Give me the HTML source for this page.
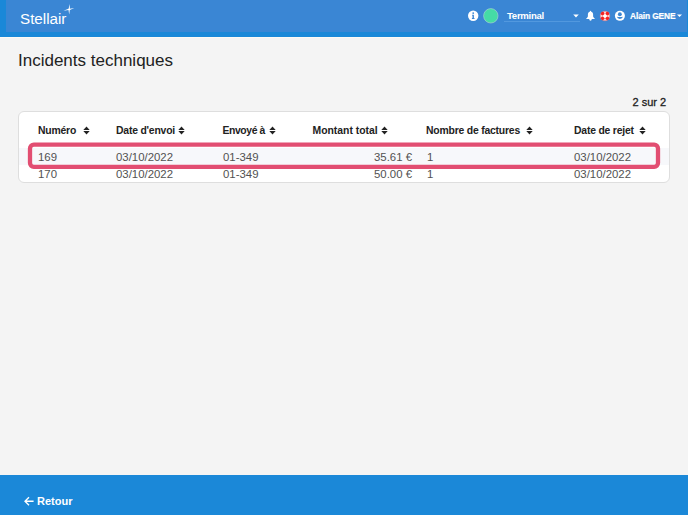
<!DOCTYPE html>
<html><head><meta charset="utf-8">
<style>
*{box-sizing:border-box;margin:0;padding:0}
html,body{width:688px;height:515px;overflow:hidden;background:#f4f4f4;font-family:"Liberation Sans",sans-serif;position:relative}
.abs{position:absolute;white-space:nowrap}
#hdr{position:absolute;left:0;top:0;width:688px;height:37px;background:#1a88d8}
#hdrin{position:absolute;left:6px;top:0;width:681px;height:32px;background:#3a86d4}
#hline{position:absolute;left:0;top:37px;width:688px;height:1px;background:#fcfaf5}
.logo{left:20px;top:10px;font-size:15.2px;color:#fff;line-height:17px}
.w{color:#fff;font-weight:bold}
#title{left:18px;top:51px;font-size:17px;color:#222;line-height:20px}
#count{left:632.5px;top:94.5px;font-size:11px;color:#1e1e1e;line-height:14px;-webkit-text-stroke:0.3px #1e1e1e}
#card{position:absolute;left:18px;top:111px;width:652px;height:71.5px;background:#fff;border:1px solid #dedede;border-radius:6px}
#rowbg{position:absolute;left:19px;top:147.5px;width:650px;height:17px;background:#f7f8fb}
#hl{position:absolute;left:28px;top:142.5px;width:632px;height:26.5px;border:4px solid #e24e72;border-radius:5px}
.th{font-size:10.4px;letter-spacing:-0.2px;font-weight:bold;color:#222;line-height:12px;top:124.6px}
.td{font-size:11.4px;color:#525252;line-height:13px}
.sort{position:absolute;top:125.5px;width:7px;height:9px}
#ftr{position:absolute;left:0;top:474.5px;width:688px;height:41px;background:#1b88d8}
</style></head><body>
<div id="hdr"></div><div id="hdrin"></div><div id="hline"></div>
<div class="abs logo">Stellair</div>
<svg class="abs" style="left:62px;top:2px" width="14" height="14" viewBox="0 0 14 14">
<path d="M7.85 2.0 L7.85 6.7 L12.3 5.9 L7.8 8.0 L7.2 12.4 L6.5 8.0 L1.4 8.7 L6.55 6.7 Z" fill="#fff"/>
</svg>
<!-- right header -->
<svg class="abs" style="left:467px;top:10px" width="12" height="12" viewBox="0 0 12 12">
<circle cx="6.2" cy="5.8" r="5.2" fill="#fff"/>
<circle cx="6.2" cy="3.1" r="0.9" fill="#3a86d4"/>
<path d="M5 4.7 H6.9 V8.1 H7.5 V8.9 H4.9 V8.1 H5.5 V5.5 H5Z" fill="#3a86d4"/>
</svg>
<svg class="abs" style="left:483px;top:8px" width="16" height="16" viewBox="0 0 16 16">
<circle cx="7.8" cy="7.8" r="7.2" fill="#45dba6" stroke="#b5d3d6" stroke-width="0.6"/>
</svg>
<div class="abs w" style="left:507px;top:10.3px;font-size:9.6px;letter-spacing:-0.3px;line-height:11px">Terminal</div>
<div class="abs" style="left:504px;top:20.5px;width:76px;height:1.2px;background:#5298de"></div>
<svg class="abs" style="left:572px;top:13px" width="8" height="6" viewBox="0 0 8 6"><path d="M1.2 1.4 H6.8 L4 4.6Z" fill="#fff"/></svg>
<svg class="abs" style="left:584px;top:9px" width="13" height="13" viewBox="0 0 13 13">
<path d="M6.5 1.8 C6.1 1.8 5.9 2.2 5.8 2.7 C4.6 3 3.9 4 3.9 5.3 V7.2 C3.9 8 3.1 8.9 1.9 9.9 H11.1 C9.9 8.9 9.1 8 9.1 7.2 V5.3 C9.1 4 8.4 3 7.2 2.7 C7.1 2.2 6.9 1.8 6.5 1.8Z" fill="#fff"/>
<path d="M5.2 9.8 H7.8 C7.8 11 7.2 11.8 6.5 11.8 C5.8 11.8 5.2 11 5.2 9.8Z" fill="#fff"/>
</svg>
<svg class="abs" style="left:599px;top:10px" width="12" height="12" viewBox="0 0 12 12">
<circle cx="6" cy="6" r="4.8" fill="#fadede" stroke="#f06464" stroke-width="0.5"/>
<circle cx="3.65" cy="3.65" r="1.8" fill="#f52222"/>
<circle cx="8.35" cy="3.65" r="1.8" fill="#f52222"/>
<circle cx="3.65" cy="8.35" r="1.8" fill="#f52222"/>
<circle cx="8.35" cy="8.35" r="1.8" fill="#f52222"/>
<circle cx="6" cy="6" r="1.8" fill="#fff"/>
</svg>
<svg class="abs" style="left:614px;top:10px" width="12" height="12" viewBox="0 0 12 12">
<circle cx="5.9" cy="5.85" r="5" fill="#fff"/>
<circle cx="5.85" cy="4.25" r="1.95" fill="#3a86d4"/>
<path d="M2.9 6.8 Q5.9 7.3 8.9 6.8 Q8.5 8.9 5.9 8.9 Q3.3 8.9 2.9 6.8Z" fill="#3a86d4"/>
</svg>
<div class="abs w" style="left:630px;top:11px;font-size:8.4px;letter-spacing:-0.1px;line-height:11px;-webkit-text-stroke:0.2px #fff">Alain GENE</div>
<svg class="abs" style="left:676px;top:13px" width="7" height="5" viewBox="0 0 7 5"><path d="M1 1.4 H6 L3.5 4Z" fill="#fff"/></svg>

<div class="abs" id="title">Incidents techniques</div>
<div class="abs" id="count">2 sur 2</div>
<div id="card"></div>
<div id="rowbg"></div>

<div class="abs th" style="left:38px">Numéro</div>
<div class="abs th" style="left:116px">Date d'envoi</div>
<div class="abs th" style="left:222.5px;letter-spacing:-0.4px">Envoyé à</div>
<div class="abs th" style="left:312.5px;letter-spacing:0px">Montant total</div>
<div class="abs th" style="left:426px">Nombre de factures</div>
<div class="abs th" style="left:574px">Date de rejet</div>

<svg class="sort" style="left:82.5px" viewBox="0 0 7 9"><path d="M0.3 3.9 L3.5 0.5 L6.7 3.9Z M0.3 5.1 L3.5 8.5 L6.7 5.1Z" fill="#222"/></svg>
<svg class="sort" style="left:178px" viewBox="0 0 7 9"><path d="M0.3 3.9 L3.5 0.5 L6.7 3.9Z M0.3 5.1 L3.5 8.5 L6.7 5.1Z" fill="#222"/></svg>
<svg class="sort" style="left:269px" viewBox="0 0 7 9"><path d="M0.3 3.9 L3.5 0.5 L6.7 3.9Z M0.3 5.1 L3.5 8.5 L6.7 5.1Z" fill="#222"/></svg>
<svg class="sort" style="left:381px" viewBox="0 0 7 9"><path d="M0.3 3.9 L3.5 0.5 L6.7 3.9Z M0.3 5.1 L3.5 8.5 L6.7 5.1Z" fill="#222"/></svg>
<svg class="sort" style="left:525.5px" viewBox="0 0 7 9"><path d="M0.3 3.9 L3.5 0.5 L6.7 3.9Z M0.3 5.1 L3.5 8.5 L6.7 5.1Z" fill="#222"/></svg>
<svg class="sort" style="left:638.5px" viewBox="0 0 7 9"><path d="M0.3 3.9 L3.5 0.5 L6.7 3.9Z M0.3 5.1 L3.5 8.5 L6.7 5.1Z" fill="#222"/></svg>
<div class="abs td" style="left:38px;top:150.8px">169</div>
<div class="abs td" style="left:116px;top:150.8px">03/10/2022</div>
<div class="abs td" style="left:223px;top:150.8px">01-349</div>
<div class="abs td" style="left:340px;top:150.8px;width:72px;text-align:right">35.61 €</div>
<div class="abs td" style="left:427px;top:150.8px">1</div>
<div class="abs td" style="left:574px;top:150.8px">03/10/2022</div>

<div class="abs td" style="left:38px;top:168px">170</div>
<div class="abs td" style="left:116px;top:168px">03/10/2022</div>
<div class="abs td" style="left:223px;top:168px">01-349</div>
<div class="abs td" style="left:340px;top:168px;width:72px;text-align:right">50.00 €</div>
<div class="abs td" style="left:427px;top:168px">1</div>
<div class="abs td" style="left:574px;top:168px">03/10/2022</div>

<svg class="abs" style="left:0;top:0" width="688" height="200"><rect x="30" y="144.6" width="628" height="22.3" rx="3.8" ry="3.8" fill="none" stroke="#e24e72" stroke-width="4.3"/></svg>

<div id="ftr"></div>
<svg class="abs" style="left:23px;top:495px" width="12" height="12" viewBox="0 0 12 12">
<path d="M10.6 6.2 H2.4 M6 2.2 L2 6.2 L6 10.2" fill="none" stroke="#fff" stroke-width="1.35"/>
</svg>
<div class="abs w" style="left:37px;top:494.7px;font-size:11px;line-height:13px">Retour</div>
</body></html>
